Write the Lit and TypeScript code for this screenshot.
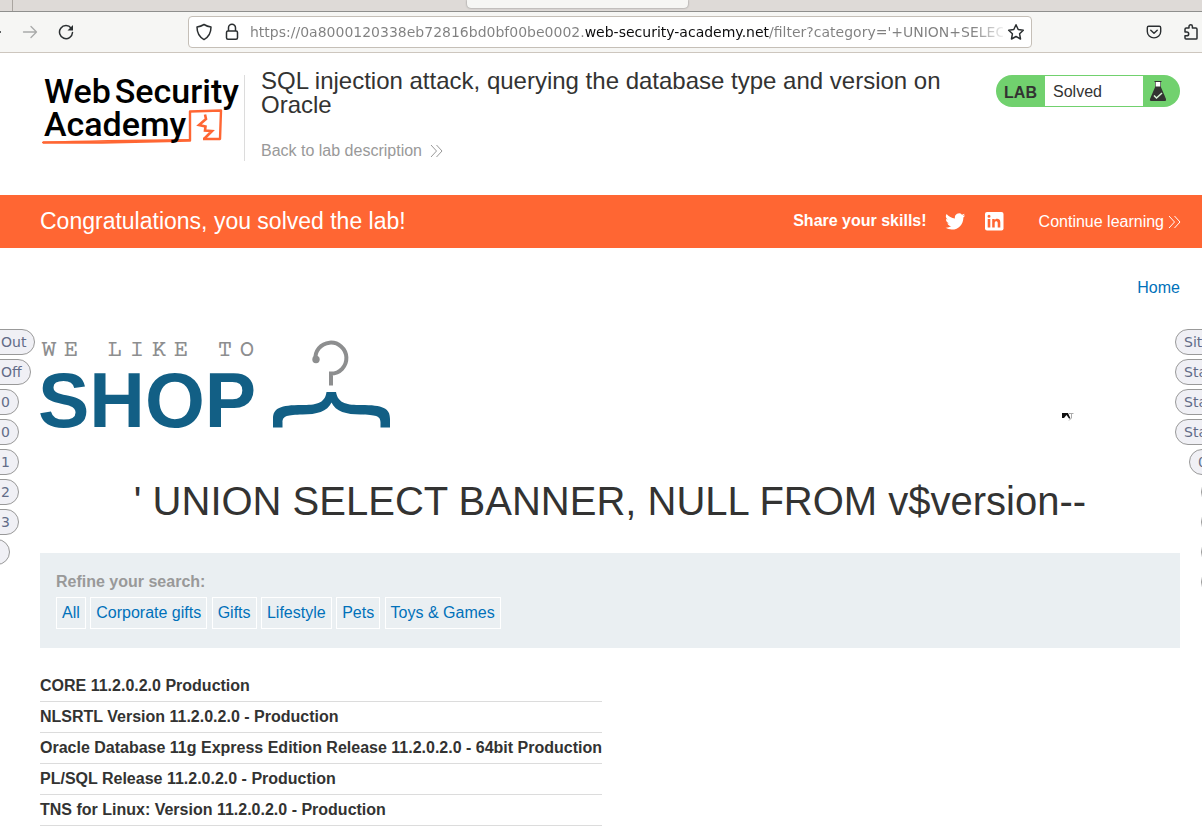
import { LitElement, html, css } from "lit";
import { customElement } from "lit/decorators.js";

const chevrons = html`<svg class="chev" width="14" height="14" viewBox="0 0 14 14" aria-hidden="true">
  <path d="M1 1l5.500 6L1 13M6.500 1L12 7l-5.500 6" fill="none" stroke="currentColor" />
</svg>`;

@customElement("browser-bar")
export class BrowserBar extends LitElement {
  static styles = css`
    :host { display: block; }
    .tabs { height: 11px; background: #dedad7; border-bottom: 1px solid #8f8f8d; display: flex; align-items: flex-start; }
    .stub { width: 12px; height: 11px; border-right: 1px solid #aaa5a0; }
    .tab { width: 221px; height: 8px; margin-left: 454px; background: #f6f6f4; border-radius: 0 0 4px 4px; box-shadow: 0 0 2px #777; }
    .bar { height: 40px; background: #f6f6f4; border-bottom: 1px solid #cdc6be; display: flex; align-items: center; color: #2b2f31; }
    .bar button { border: 0; background: none; padding: 0; color: inherit; display: flex; }
    .nav { display: flex; align-items: center; width: 188px; gap: 20px; overflow: hidden; flex: none; }
    .nav .back { margin-left: -14px; }
    .nav .forward { color: #a9aaa9; }
    .field { box-sizing: border-box; flex: 0 1 844px; height: 32px; background: #fff; border: 1px solid #c5bfb7; border-radius: 4px; display: flex; align-items: center; padding: 0 6px; gap: 10px; }
    .field svg { flex: none; }
    .url {
      flex: 1; min-width: 0; border: 0; outline: 0; padding: 0; height: 24px; margin: 0 -6px 0 -1px;
      font: 14px "DejaVu Sans", sans-serif; color: transparent;
      background: linear-gradient(90deg, #808080 0 334px, #0c0c0d 334px 519px, #808080 519px 722px, transparent 758px);
      -webkit-background-clip: text; background-clip: text;
    }
    .tools { margin-left: auto; padding-right: 2px; display: flex; align-items: center; gap: 20px; }
  `;
  render() {
    return html`
      <div class="tabs"><div class="stub"></div><div class="tab"></div></div>
      <div class="bar">
        <div class="nav">
          <button class="back" aria-label="Back"><svg width="16" height="16" viewBox="0 0 16 16"><path d="M15 8H1M7 2L1 8l6 6" fill="none" stroke="currentColor" stroke-width="1.300"/></svg></button>
          <button class="forward" aria-label="Forward"><svg width="16" height="16" viewBox="0 0 16 16"><path d="M1.500 8h13M9 2.500L14.500 8 9 13.500" fill="none" stroke="currentColor" stroke-width="1.300" stroke-linecap="round" stroke-linejoin="round"/></svg></button>
          <button class="reload" aria-label="Reload"><svg width="16" height="16" viewBox="0 0 16 16"><path d="M13.200 4.200A6.500 6.500 0 1 0 14.500 8.500" fill="none" stroke="currentColor" stroke-width="1.500" stroke-linecap="round"/><path d="M15 1v5.500H9.500z" fill="currentColor"/></svg></button>
        </div>
        <div class="field">
          <svg width="18" height="18" viewBox="0 0 18 18"><path d="M9 1.500C11.500 3 13.500 3.600 16 4c0 5-1.500 9.500-7 12.600C3.500 13.500 2 9 2 4c2.500-.4 4.500-1 7-2.500z" fill="none" stroke="currentColor" stroke-width="1.500" stroke-linejoin="round"/></svg>
          <svg width="18" height="18" viewBox="0 0 18 18"><rect x="3.500" y="8" width="11" height="8.200" rx="1.500" fill="none" stroke="currentColor" stroke-width="1.500"/><path d="M5.500 8V4.800a3.500 3.500 0 0 1 7 0V8" fill="none" stroke="currentColor" stroke-width="1.500"/></svg>
          <input class="url" type="text" aria-label="Address" value="https://0a8000120338eb72816bd0bf00be0002.web-security-academy.net/filter?category='+UNION+SELECT+BANNER,+NULL+FROM+v$version--" />
          <button aria-label="Bookmark this page"><svg width="18" height="18" viewBox="0 0 18 18"><path d="M9 1.800l2.200 4.700 5.100.7-3.700 3.600.9 5.200L9 13.500 4.500 16l.9-5.200L1.700 7.200l5.100-.7z" fill="none" stroke="currentColor" stroke-width="1.500" stroke-linejoin="round"/></svg></button>
        </div>
        <div class="tools">
          <button aria-label="Save to Pocket"><svg width="16" height="16" viewBox="0 0 16 16"><path d="M2.700 2.300h10.600a1.400 1.400 0 0 1 1.400 1.400V7.500a6.700 6.400 0 0 1-13.400 0V3.700a1.400 1.400 0 0 1 1.400-1.400z" fill="none" stroke="currentColor" stroke-width="1.400"/><path d="M4.800 6.300L8 9.200l3.200-2.900" fill="none" stroke="currentColor" stroke-width="1.500" stroke-linecap="round" stroke-linejoin="round"/></svg></button>
          <button aria-label="Extensions"><svg width="18" height="18" viewBox="0 0 18 18"><path d="M3 8V6.200q0-1.200 1.200-1.200H7V3.500a1.700 1.700 0 0 1 3.400 0V5h3.400Q15 5 15 6.200v9Q15 16 14 16H4q-1 0-1-1v-2.200h1.800a1.900 1.900 0 0 0 0-3.800H3z" fill="none" stroke="currentColor" stroke-width="1.500" stroke-linejoin="round"/></svg></button>
        </div>
      </div>`;
  }
}

@customElement("lab-header")
export class LabHeader extends LitElement {
  static styles = css`
    :host { display: block; }
    .head { display: flex; align-items: flex-start; padding: 22px 22px 34px 40px; }
    .logo { position: relative; flex: none; box-sizing: border-box; width: 205px; height: 86px; border-right: 1px solid #dcdcdc; color: #000; }
    .words { position: relative; z-index: 1; padding-left: 4px; font: 500 34px/33px Roboto, sans-serif; white-space: nowrap; }
    .line { display: flex; gap: 4px; }
    .mark { position: absolute; left: 0; top: 32px; }
    .title { flex: 1; padding: 0 16px; }
    h2 { margin: -6px 0 24px; font-size: 24px; line-height: 24px; font-weight: 400; }
    .backlink { color: #999; text-decoration: none; display: inline-flex; align-items: center; gap: 8px; line-height: 20px; }
    .state { flex: none; box-sizing: border-box; width: 184px; height: 32px; background: #71d16e; border-radius: 16px; padding: 1px 0; display: flex; align-items: stretch; line-height: 32px; }
    .lab { font-weight: 700; width: 49px; text-align: center; line-height: 34px; }
    .solved { width: 98px; height: 30px; background: #fff; padding-left: 8px; box-sizing: border-box; }
    .flask { padding: 4px 0 0 6px; }
    .banner { background: #ff6633; color: #fff; min-height: 53px; padding: 0 20px 0 40px; display: flex; align-items: center; }
    .congrats { font-size: 23px; flex: 1; }
    .banner a { color: inherit; text-decoration: none; display: flex; align-items: center; gap: 4px; }
    .share { font-weight: 700; margin-right: 18px; padding-bottom: 2px; }
    .twitter { margin-right: 18px; }
    .next { margin-left: 34px; }
  `;
  render() {
    return html`
      <header class="head">
        <div class="logo">
          <div class="words"><div class="line"><span>Web</span><span>Security</span></div><div>Academy</div></div>
          <svg class="mark" width="200" height="40" viewBox="0 0 200 40" fill="none" stroke="#ff6633">
            <path d="M2 35.500Q60 33.500 150 32.800" stroke-width="1.600"/>
            <path d="M3 35.500H62L150 33.500V4.500L181 3.500 180 32H163" stroke-width="2.400" stroke-linejoin="round"/>
            <path d="M165 7.500L166 12 159 18 165.500 19.500 165 23.500 172 24 164 32" stroke-width="2.600"/>
          </svg>
        </div>
        <div class="title">
          <h2>SQL injection attack, querying the database type and version on Oracle</h2>
          <a class="backlink" href="#">Back to lab description ${chevrons}</a>
        </div>
        <div class="state">
          <div class="lab">LAB</div><div class="solved">Solved</div>
          <div class="flask"><svg width="18" height="22" viewBox="0 0 18 22"><path d="M6.500 2h5v6h-5z" fill="#fff"/><path d="M5.500 1.500h7" stroke="#333332" stroke-width="1"/><path d="M6.500 2v5M11.500 2v5" stroke="#777"/><path d="M6.300 6.500h5.400L17 19q.6 2-1 2H2q-1.600 0-1-2z" fill="#333332"/><path d="M5 15.500l2.500 2.500L13 13" stroke="#d8f3d7" stroke-width="1.500" fill="none"/></svg></div>
        </div>
      </header>
      <div class="banner">
        <div class="congrats">Congratulations, you solved the lab!</div>
        <span class="share">Share your skills!</span>
        <a class="twitter" href="#" aria-label="Share on Twitter"><svg width="21" height="20" viewBox="0 0 24 24"><path fill="#fff" d="M23.600 3.900a10 10 0 0 1-2.800.8 4.900 4.900 0 0 0 2.100-2.700 10 10 0 0 1-3.100 1.200 4.900 4.900 0 0 0-8.400 4.500A14 14 0 0 1 1.300 2.500a4.900 4.900 0 0 0 1.500 6.600 5 5 0 0 1-2.200-.6 4.900 4.900 0 0 0 3.900 4.900 5 5 0 0 1-2.200.1 4.900 4.900 0 0 0 4.600 3.400A10 10 0 0 1 0 18.900a14 14 0 0 0 7.500 2.200c9 0 14.200-7.700 13.900-14.600a10 10 0 0 0 2.200-2.600z"/></svg></a>
        <a href="#" aria-label="Share on LinkedIn"><svg width="21" height="20" viewBox="0 0 21 20"><rect x="1" y="0" width="18.500" height="18.500" rx="2" fill="#fff"/><path fill="#ff6633" d="M3.700 7h2.600v8.500H3.700zM5 2.700a1.500 1.500 0 1 1 0 3 1.500 1.500 0 0 1 0-3zM8.200 7h2.500v1.200c1.400-2.200 5.600-1.800 5.600 2v5.300h-2.600V11c0-2.400-3-2.200-3 0v4.500H8.200z"/></svg></a>
        <a class="next" href="#">Continue learning ${chevrons}</a>
      </div>`;
  }
}

@customElement("shop-page")
export class ShopPage extends LitElement {
  static styles = css`
    :host { display: block; padding: 30px 22px 12px 40px; }
    a { color: #0071ba; text-decoration: none; }
    .top { text-align: right; line-height: 20px; }
    .brand { display: flex; gap: 18px; margin-top: 40px; height: 95px; }
    .tag { display: grid; grid-template-columns: repeat(10, 22px); margin-left: -2px; text-align: center; font: 24px/26px "Courier Prime", "DejaVu Serif", serif; color: #8d8e8f; height: 26px; }
    .shop { font: bold 77px/72px "Liberation Sans", sans-serif; color: #125f85; margin-left: -2px; }
    .word { width: 215px; }
    h1 { margin: 44px 0 28px; font-size: 40px; line-height: 48px; font-weight: 400; text-align: center; }
    .filters { background: #eaeff2; padding: 19px 16px; }
    .label { color: #999; font-weight: 700; line-height: 20px; margin-bottom: 5px; }
    .list { line-height: 32px; }
    .list a { display: inline-block; border: 1px solid #fff; padding: 0 5px; line-height: 30px; }
    table { border-collapse: collapse; margin-top: 23px; }
    th { text-align: left; padding: 5px 0; line-height: 20px; border-bottom: 1px solid #dcdcdc; white-space: nowrap; }
  `;
  render() {
    const filters = ["All", "Corporate gifts", "Gifts", "Lifestyle", "Pets", "Toys & Games"];
    const rows = [
      "CORE 11.2.0.2.0 Production",
      "NLSRTL Version 11.2.0.2.0 - Production",
      "Oracle Database 11g Express Edition Release 11.2.0.2.0 - 64bit Production",
      "PL/SQL Release 11.2.0.2.0 - Production",
      "TNS for Linux: Version 11.2.0.2.0 - Production",
    ];
    return html`
      <nav class="top"><a href="#">Home</a></nav>
      <div class="brand">
        <div class="word">
          <div class="tag">${[..."WE LIKE TO"].map((c) => html`<span>${c}</span>`)}</div>
          <div class="shop">SHOP</div>
        </div>
        <svg width="118" height="92" viewBox="0 0 118 92" fill="none">
          <path d="M42.500 22a15.500 15.500 0 1 1 15.500 13.600V47.500" stroke="#8d8e8f" stroke-width="4"/>
          <circle cx="43" cy="21.500" r="3.700" fill="#8d8e8f"/>
          <path d="M53.500 54h9.500C65 66 75 67 88 67c22 0 29 3 29 14v8.500h-9.500v-5c0-7-5-7.500-20-8-14 0-25-3-29-12-4 9-15 12-29 12-15 .5-20 1-20 8v5H0V81c0-11 7-14 29-14 13 0 23-1 24.500-13z" fill="#125f85"/>
        </svg>
      </div>
      <h1>' UNION SELECT BANNER, NULL FROM v$version--</h1>
      <section class="filters">
        <div class="label">Refine your search:</div>
        <div class="list">${filters.map((f) => html`<a href="#">${f}</a> `)}</div>
      </section>
      <table><tbody>${rows.map((r) => html`<tr><th scope="row">${r}</th></tr>`)}</tbody></table>`;
  }
}

@customElement("app-root")
export class AppRoot extends LitElement {
  static styles = css`
    :host { display: block; position: relative; overflow: hidden; min-height: 100vh; background: #fff; color: #333332; font: 16px "Liberation Sans", Arial, sans-serif; }
    .side { position: absolute; top: 329px; display: flex; flex-direction: column; gap: 4px; }
    .left { left: -20px; align-items: flex-start; }
    .right { left: calc(100% - 27px); align-items: flex-start; }
    .side button { box-sizing: border-box; height: 26px; border: 1px solid #999; border-radius: 13px; background: #f0f0f5; color: #626c88; font: 14px "DejaVu Sans", sans-serif; padding: 0 8px; white-space: nowrap; }
    .left button { padding-left: 20px; }
    .left .blank { width: 30px; }
    .right .count { margin-left: 14px; }
    .right .edge { margin-left: 26px; width: 30px; }
    .pointer { position: absolute; left: 1061px; top: 412px; }
  `;
  render() {
    return html`
      <browser-bar></browser-bar>
      <lab-header></lab-header>
      <shop-page></shop-page>
      <div class="side left">
        ${["Out", "Off", "0", "0", "1", "2", "3"].map((t) => html`<button>${t}</button>`)}
        <button class="blank" aria-label="More"></button>
      </div>
      <div class="side right">
        ${["Site", "Start", "Start", "Start"].map((t) => html`<button>${t}</button>`)}
        <button class="count">0</button>
        ${[1, 2, 3, 4].map((n) => html`<button class="edge" aria-label="Alerts ${n}"></button>`)}
      </div>
      <svg class="pointer" width="14" height="10" viewBox="0 0 14 10" aria-hidden="true">
        <path d="M1 1h6l2.500 5.500H8L5.500 3 3 6 1 6z" fill="#111"/>
        <path d="M8 1.500h4.500M10.500 2v4L8 8.500" stroke="#aaa" fill="none"/>
      </svg>`;
  }
}
